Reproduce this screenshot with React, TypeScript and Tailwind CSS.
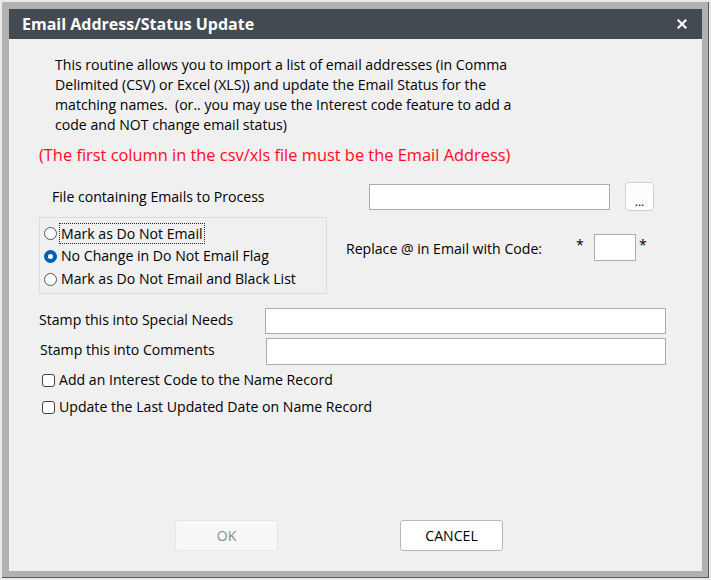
import React from "react";

const font = { fontFamily: '"Open Sans", "Noto Sans", sans-serif' };

function Radio({ checked }: { checked?: boolean }) {
  return checked ? (
    <span className="w-[13px] h-[13px] rounded-full bg-[#005fb8] flex items-center justify-center shrink-0">
      <span className="w-[5px] h-[5px] rounded-full bg-white" />
    </span>
  ) : (
    <span className="w-[13px] h-[13px] rounded-full border border-[#555] bg-white shrink-0" />
  );
}

function Check() {
  return <span className="w-[13px] h-[13px] rounded-[3px] border border-[#444] bg-white shrink-0" />;
}

export default function App() {
  return (
    <div className="w-[711px] h-[580px] bg-[#e9e9e9] p-[2px]" style={font}>
      <div className="w-[707px] h-[576px] bg-[#b1b1b1] border-r border-b border-[#5a5a5a] pt-[7px] pl-[7px]">
        <div className="w-[693px] h-[562px] bg-[#f0f0f0] flex flex-col text-[14.1px] text-black">
          <div className="h-[30px] bg-[#434a52] flex items-center justify-between pl-[13px] pr-[15px] shrink-0">
            <span className="text-white font-bold text-[16px] leading-none">Email Address/Status Update</span>
            <svg width="10" height="10" viewBox="0 0 10 10">
              <path d="M1.5 1.5 L8.5 8.5 M8.5 1.5 L1.5 8.5" stroke="white" strokeWidth="2.2" strokeLinecap="square" />
            </svg>
          </div>
          <div className="flex-1 flex flex-col">
            <p className="mt-[16px] ml-[46px] w-[480px] leading-[20px]">
              This routine allows you to import a list of email addresses (in Comma<br />
              Delimited (CSV) or Excel (XLS)) and update the Email Status for the<br />
              matching names.&nbsp; (or.. you may use the Interest code feature to add a<br />
              code and NOT change email status)
            </p>
            <p className="mt-[9px] ml-[30px] text-[16.4px] leading-[22px] text-[#ff0a1e]">
              (The first column in the csv/xls file must be the Email Address)
            </p>
            <div className="mt-[16px] flex items-center h-[29px]">
              <span className="ml-[43px] w-[317px]">File containing Emails to Process</span>
              <div className="w-[241px] h-[26px] bg-white border border-[#acacac]" />
              <button className="ml-[15px] w-[29px] h-[29px] rounded-[4px] bg-[#fdfdfd] border border-[#d0d0d0] text-[12px] leading-none pb-[2px] flex items-end justify-center">...</button>
            </div>
            <div className="mt-[6px] flex">
              <div className="ml-[30px] w-[288px] h-[77px] border border-[#dcdcdc] flex flex-col pl-[4px] pt-[4px]">
                <div className="flex items-center h-[22px]">
                  <Radio />
                  <span className="ml-[2px] px-[1px] border border-dotted border-[#222] leading-[19px]">Mark as Do Not Email</span>
                </div>
                <div className="flex items-center h-[24px]">
                  <Radio checked />
                  <span className="ml-[4px]">No Change in Do Not Email Flag</span>
                </div>
                <div className="flex items-center h-[22px]">
                  <Radio />
                  <span className="ml-[4px]">Mark as Do Not Email and Black List</span>
                </div>
              </div>
              <div className="flex items-start ml-[19px] mt-[17px]">
                <span className="mt-[4px] w-[230px]">Replace @ in Email with Code:</span>
                <span className="w-[18px]">*</span>
                <div className="w-[42px] h-[27px] bg-white border border-[#acacac]" />
                <span className="ml-[3px]">*</span>
              </div>
            </div>
            <div className="mt-[14px] flex items-center h-[26px]">
              <span className="ml-[30px] w-[226px] -mt-[2px]">Stamp this into Special Needs</span>
              <div className="w-[401px] h-[26px] bg-white border border-[#acacac]" />
            </div>
            <div className="mt-[4px] flex items-center h-[27px]">
              <span className="ml-[31px] w-[226px] -mt-[4px]">Stamp this into Comments</span>
              <div className="w-[400px] h-[27px] bg-white border border-[#acacac]" />
            </div>
            <div className="mt-[4px] ml-[33px] flex items-center h-[22px]">
              <Check />
              <span className="ml-[4px]">Add an Interest Code to the Name Record</span>
            </div>
            <div className="mt-[5px] ml-[33px] flex items-center h-[22px]">
              <Check />
              <span className="ml-[4px]">Update the Last Updated Date on Name Record</span>
            </div>
            <div className="mt-auto mb-[20px] flex">
              <button className="ml-[166px] w-[103px] h-[31px] rounded-[3px] bg-[#f8f8f8] border border-[#e6e6e6] text-[#8a8a8a]">OK</button>
              <button className="ml-[122px] w-[103px] h-[31px] rounded-[3px] bg-white border border-[#b8b8b8] text-black">CANCEL</button>
            </div>
          </div>
        </div>
      </div>
    </div>
  );
}
